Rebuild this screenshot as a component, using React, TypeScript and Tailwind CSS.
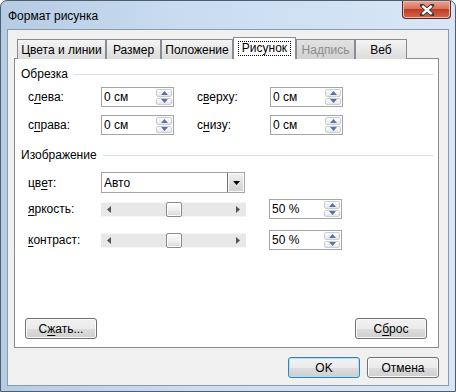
import React from "react";

const U = ({ children }: { children: React.ReactNode }) => (
  <span className="underline underline-offset-[2px] decoration-1">{children}</span>
);

function SpinBtn({ up }: { up: boolean }) {
  return (
    <div className="flex flex-1 items-center justify-center rounded-[2px] border border-[#c9ced6] bg-[linear-gradient(#fdfdfd,#e6e8ec)]">
      <svg width="7" height="4" viewBox="0 0 7 4">
        {up ? (
          <path d="M0 4 L3.5 0 L7 4Z" fill="#5b70a6" />
        ) : (
          <path d="M0 0 L3.5 4 L7 0Z" fill="#5b70a6" />
        )}
      </svg>
    </div>
  );
}

function Spin({ value }: { value: string }) {
  return (
    <div className="flex h-[20px] w-[73px] border border-[#a5a5a5] bg-white">
      <div className="flex flex-1 items-center pl-[2px]">{value}</div>
      <div className="flex w-[17px] flex-col gap-px py-px pr-px">
        <SpinBtn up />
        <SpinBtn up={false} />
      </div>
    </div>
  );
}

function Slider() {
  return (
    <div className="relative flex h-[15px] w-[145px] items-center justify-between border-y border-[#f5f5f5] bg-[#e8e8e8] px-[6px]">
      <svg width="4" height="7" viewBox="0 0 4 7">
        <path d="M4 0 L0 3.5 L4 7Z" fill="#555555" />
      </svg>
      <svg width="4" height="7" viewBox="0 0 4 7">
        <path d="M0 0 L4 3.5 L0 7Z" fill="#555555" />
      </svg>
      <div className="absolute left-[65px] top-[-1px] h-[15px] w-[16px] rounded-[2px] border border-[#8a8a8a] bg-[linear-gradient(#fcfcfc,#f0f0f0_50%,#d8d8d8)] shadow-[inset_0_0_0_1px_#ffffff]" />
    </div>
  );
}

function Btn({ children, def }: { children: React.ReactNode; def?: boolean }) {
  return (
    <div
      className={
        "flex h-[21px] w-[72px] items-center justify-center rounded-[3px] border bg-[linear-gradient(#f2f2f2,#ebebeb_50%,#dddddd_50%,#cfcfcf)] " +
        (def
          ? "border-[#3c7fb1] shadow-[inset_0_0_0_1px_#aee0f8]"
          : "border-[#707070] shadow-[inset_0_0_0_1px_#fbfbfb]")
      }
    >
      {children}
    </div>
  );
}

function Tab({ label, w, disabled }: { label: string; w: number; disabled?: boolean }) {
  return (
    <div
      style={{ width: w }}
      className={
        "mt-[2px] flex h-[20px] items-center justify-center border border-b-0 border-[#898c95] " +
        (disabled
          ? "bg-[linear-gradient(#e2e2e2,#d2d2d2)] text-[#8d8d8d]"
          : "bg-[linear-gradient(#f4f4f4,#e8e8e8_50%,#dcdcdc)]")
      }
    >
      {label}
    </div>
  );
}

function Header({ children }: { children: React.ReactNode }) {
  return (
    <div className="flex items-center gap-[6px] pl-[6px] pr-[5px] leading-[14px]">
      <span>{children}</span>
      <div className="h-px flex-1 bg-[#d5dfe5]" />
    </div>
  );
}

export default function App() {
  return (
    <div className="h-[392px] w-[456px] overflow-hidden bg-white font-['Liberation_Sans',Arial,sans-serif] text-[12px] leading-[14px] text-black">
      <div className="flex h-[392px] w-[456px] flex-col rounded-t-[7px] border border-[#4f5d6c] bg-[linear-gradient(90deg,#b6cce4,#c9dcf0_40%,#d8e7f7)]">
        {/* title bar */}
        <div className="flex h-[28px] items-start justify-between">
          <div className="pl-[7px] pt-[8px]">Формат рисунка</div>
          <div className="mr-[4px] flex h-[18px] w-[49px] items-center justify-center rounded-b-[4px] border border-t-0 border-[#5a2a22] bg-[linear-gradient(#e9a593,#d9735c_45%,#c23b22_50%,#d46a4d)] shadow-[inset_0_0_0_1px_#f0b8a8]">
            <svg width="16" height="12" viewBox="0 0 16 12">
              <path d="M3 1.5 L13 10.5 M13 1.5 L3 10.5" stroke="#3a3a3a" strokeWidth="4.2" strokeLinecap="round" />
              <path d="M3.3 1.8 L12.7 10.2 M12.7 1.8 L3.3 10.2" stroke="#ffffff" strokeWidth="2.4" />
            </svg>
          </div>
        </div>
        {/* client */}
        <div className="mx-[6px] flex h-[357px] flex-col border border-[#8c99a8] bg-[#f0f0f0] pl-[6px] pr-[9px] pt-[7px]">
          {/* tabs */}
          <div className="relative z-10 flex h-[21px] pl-[3px]">
            <Tab label="Цвета и линии" w={89} />
            <Tab label="Размер" w={55} />
            <Tab label="Положение" w={72} />
            <div className="-mb-px flex h-[22px] w-[63px] items-center justify-center border border-b-0 border-[#898c95] bg-white">
              <span className="border border-dotted border-black px-[3px] py-px leading-[11px]">Рисунок</span>
            </div>
            <Tab label="Надпись" w={59} disabled />
            <Tab label="Веб" w={52} />
          </div>
          {/* panel */}
          <div className="flex h-[290px] flex-col border border-[#898c95] bg-white pb-[8px] pt-[8px]">
            <Header>Обрезка</Header>
            <div className="mt-[6px] flex flex-col gap-[8px] pl-[13px]">
              <div className="flex items-center">
                <div className="w-[73px]">
                  с<U>л</U>ева:
                </div>
                <Spin value="0 см" />
                <div className="w-[23px]" />
                <div className="w-[73px]">
                  с<U>в</U>ерху:
                </div>
                <Spin value="0 см" />
              </div>
              <div className="flex items-center">
                <div className="w-[73px]">
                  с<U>п</U>рава:
                </div>
                <Spin value="0 см" />
                <div className="w-[23px]" />
                <div className="w-[73px]">
                  с<U>н</U>изу:
                </div>
                <Spin value="0 см" />
              </div>
            </div>
            <div className="mt-[13px]">
              <Header>Изображение</Header>
            </div>
            <div className="mt-[10px] flex flex-col pl-[13px]">
              <div className="flex items-center">
                <div className="w-[73px]">
                  цв<U>е</U>т:
                </div>
                <div className="flex h-[21px] w-[144px] border border-[#a5a5a5] bg-white">
                  <div className="flex flex-1 items-center pl-[2px]">Авто</div>
                  <div className="flex w-[17px] items-center justify-center border-l border-[#707070] bg-[linear-gradient(#f2f2f2,#e0e0e0_50%,#cfcfcf)] shadow-[inset_0_0_0_1px_#fafafa]">
                    <svg width="7" height="4" viewBox="0 0 7 4">
                      <path d="M0 0 L7 0 L3.5 4Z" fill="#000" />
                    </svg>
                  </div>
                </div>
              </div>
              <div className="mt-[6px] flex items-center">
                <div className="w-[73px]">
                  <U>я</U>ркость:
                </div>
                <Slider />
                <div className="w-[23px]" />
                <Spin value="50 %" />
              </div>
              <div className="mt-[11px] flex items-center">
                <div className="w-[73px]">
                  <U>к</U>онтраст:
                </div>
                <Slider />
                <div className="w-[23px]" />
                <Spin value="50 %" />
              </div>
            </div>
            <div className="mt-auto flex justify-between pl-[10px] pr-[11px]">
              <Btn>
                С<U>ж</U>ать...
              </Btn>
              <Btn>
                С<U>б</U>рос
              </Btn>
            </div>
          </div>
          <div className="mt-[9px] flex justify-end gap-[7px]">
            <Btn def>OK</Btn>
            <Btn>Отмена</Btn>
          </div>
        </div>
      </div>
    </div>
  );
}
